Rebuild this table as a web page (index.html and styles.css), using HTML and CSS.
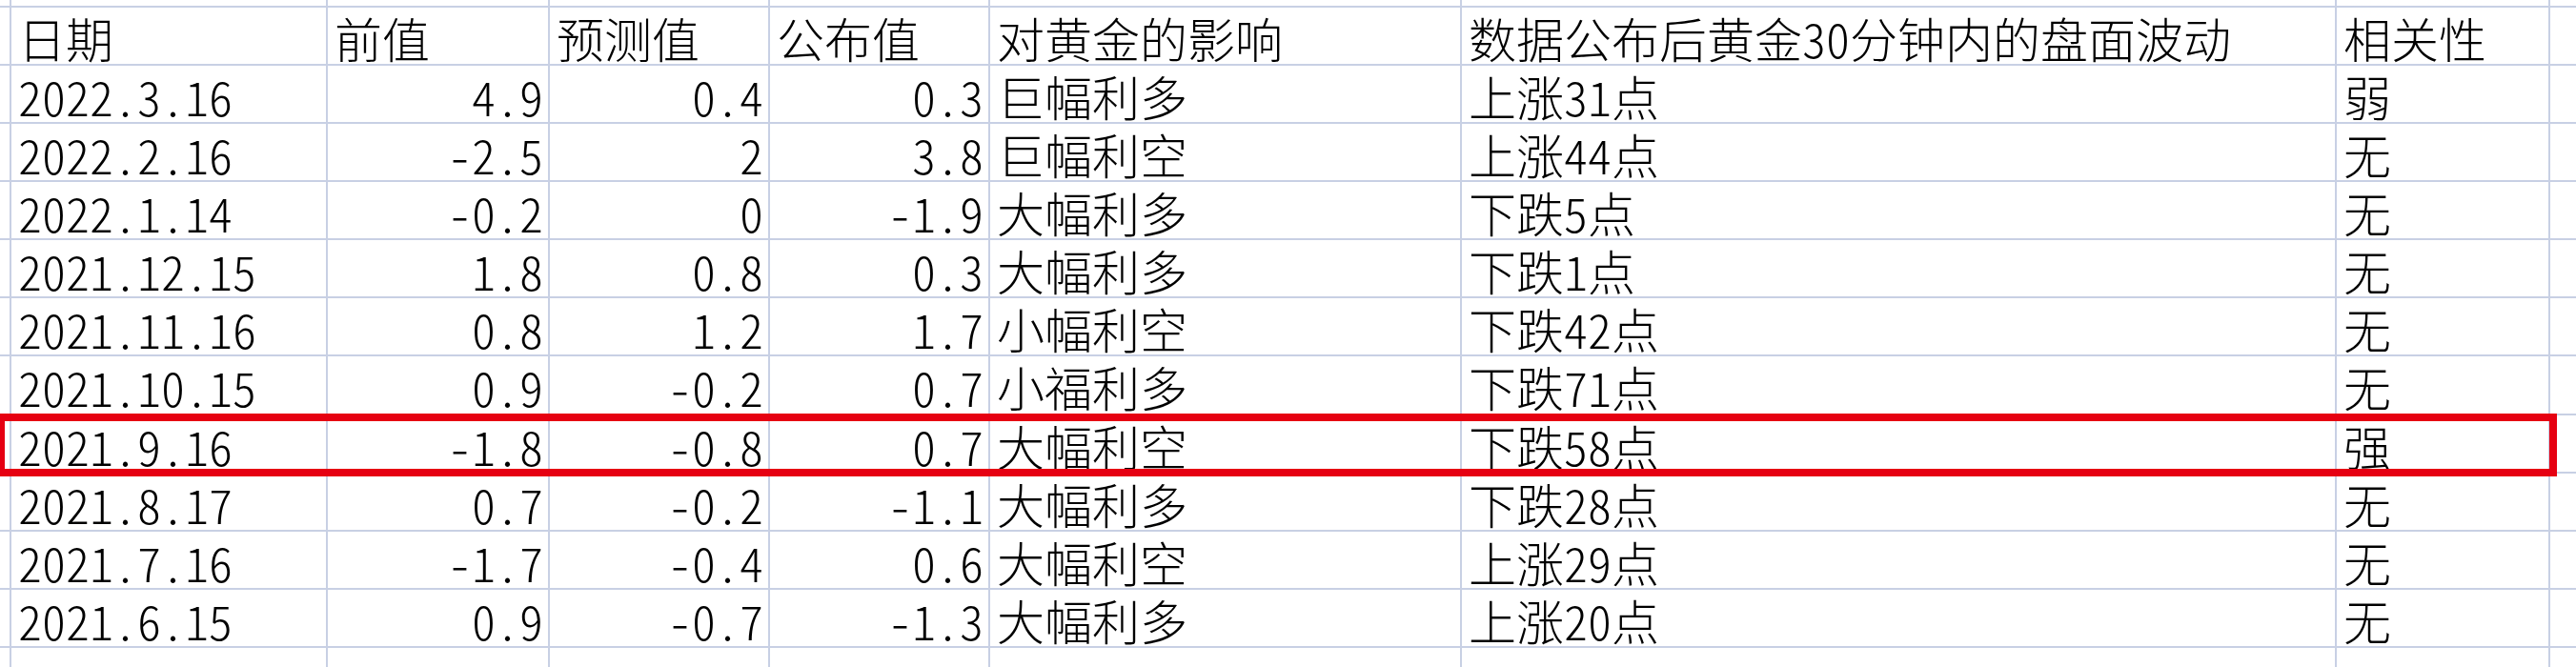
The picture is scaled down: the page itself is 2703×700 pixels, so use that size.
FILE: index.html
```html
<!DOCTYPE html>
<html lang="zh-CN">
<head>
<meta charset="utf-8">
<title>黄金数据表</title>
<link rel="stylesheet" href="styles.css">
</head>
<body>
<div class="page">
  <div class="sheet">
    <div class="row"><div class="c"></div><div class="c"></div><div class="c"></div><div class="c"></div><div class="c"></div><div class="c"></div><div class="c"></div><div class="c"></div><div class="c"></div></div>
    <div class="row"><div class="c"></div><div class="c t">日期</div><div class="c t">前值</div><div class="c t">预测值</div><div class="c t">公布值</div><div class="c t">对黄金的影响</div><div class="c t">数据公布后黄金30分钟内的盘面波动</div><div class="c t">相关性</div><div class="c"></div></div>
    <div class="row"><div class="c"></div><div class="c t">2022.3.16</div><div class="c n">4.9</div><div class="c n">0.4</div><div class="c n">0.3</div><div class="c t">巨幅利多</div><div class="c t">上涨31点</div><div class="c t">弱</div><div class="c"></div></div>
    <div class="row"><div class="c"></div><div class="c t">2022.2.16</div><div class="c n">-2.5</div><div class="c n">2</div><div class="c n">3.8</div><div class="c t">巨幅利空</div><div class="c t">上涨44点</div><div class="c t">无</div><div class="c"></div></div>
    <div class="row"><div class="c"></div><div class="c t">2022.1.14</div><div class="c n">-0.2</div><div class="c n">0</div><div class="c n">-1.9</div><div class="c t">大幅利多</div><div class="c t">下跌5点</div><div class="c t">无</div><div class="c"></div></div>
    <div class="row"><div class="c"></div><div class="c t">2021.12.15</div><div class="c n">1.8</div><div class="c n">0.8</div><div class="c n">0.3</div><div class="c t">大幅利多</div><div class="c t">下跌1点</div><div class="c t">无</div><div class="c"></div></div>
    <div class="row"><div class="c"></div><div class="c t">2021.11.16</div><div class="c n">0.8</div><div class="c n">1.2</div><div class="c n">1.7</div><div class="c t">小幅利空</div><div class="c t">下跌42点</div><div class="c t">无</div><div class="c"></div></div>
    <div class="row"><div class="c"></div><div class="c t">2021.10.15</div><div class="c n">0.9</div><div class="c n">-0.2</div><div class="c n">0.7</div><div class="c t">小福利多</div><div class="c t">下跌71点</div><div class="c t">无</div><div class="c"></div></div>
    <div class="row"><div class="c"></div><div class="c t">2021.9.16</div><div class="c n">-1.8</div><div class="c n">-0.8</div><div class="c n">0.7</div><div class="c t">大幅利空</div><div class="c t">下跌58点</div><div class="c t">强</div><div class="c"></div></div>
    <div class="row"><div class="c"></div><div class="c t">2021.8.17</div><div class="c n">0.7</div><div class="c n">-0.2</div><div class="c n">-1.1</div><div class="c t">大幅利多</div><div class="c t">下跌28点</div><div class="c t">无</div><div class="c"></div></div>
    <div class="row"><div class="c"></div><div class="c t">2021.7.16</div><div class="c n">-1.7</div><div class="c n">-0.4</div><div class="c n">0.6</div><div class="c t">大幅利空</div><div class="c t">上涨29点</div><div class="c t">无</div><div class="c"></div></div>
    <div class="row"><div class="c"></div><div class="c t">2021.6.15</div><div class="c n">0.9</div><div class="c n">-0.7</div><div class="c n">-1.3</div><div class="c t">大幅利多</div><div class="c t">上涨20点</div><div class="c t">无</div><div class="c"></div></div>
    <div class="row"><div class="c"></div><div class="c"></div><div class="c"></div><div class="c"></div><div class="c"></div><div class="c"></div><div class="c"></div><div class="c"></div><div class="c"></div></div>
  </div>
  <div class="highlight"></div>
</div>
</body>
</html>
```

FILE: styles.css
```css
html, body {
  margin: 0;
  padding: 0;
  background: #ffffff;
}

.page {
  position: relative;
  width: 2703px;
  height: 700px;
  overflow: hidden;
}

.sheet {
  display: grid;
  grid-template-columns: 10px 330px 231px 229px 229px 493px 916px 222px 1fr;
  grid-template-rows: 6px repeat(11, 59.09px) 1fr;
  gap: 2px;
  background: #c8d0e4;
  width: 2703px;
  height: 700px;
}

.row {
  display: contents;
}

.c {
  background: #ffffff;
  font-family: "Noto Sans CJK SC", "Noto Sans", sans-serif;
  font-weight: 300;
  font-size: 50px;
  line-height: 50px;
  color: #000000;
  font-feature-settings: "hwid";
  white-space: nowrap;
  display: flex;
  align-items: flex-start;
}

.t {
  justify-content: flex-start;
  padding: 6px 0 0 7px;
}

.n {
  justify-content: flex-end;
  padding: 6px 5px 0 0;
}

.highlight {
  position: absolute;
  left: -3px;
  top: 434px;
  width: 2670px;
  height: 50px;
  border: 8px solid #e60012;
}
```
